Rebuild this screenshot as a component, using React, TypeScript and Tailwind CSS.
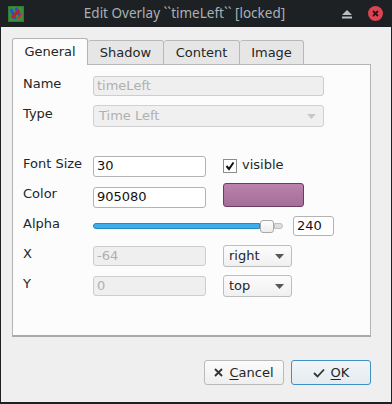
import React from "react";

const font = { fontFamily: '"DejaVu Sans", "Noto Sans", sans-serif' };
const titleFont = { fontFamily: '"Noto Sans", "DejaVu Sans", sans-serif' };

function Arrow({ color }: { color: string }) {
  return (
    <svg width="9" height="5" viewBox="0 0 9 5">
      <path d="M0 0 L9 0 L4.5 5 Z" fill={color} />
    </svg>
  );
}

function Label({ children }: { children: React.ReactNode }) {
  return <div className="w-[70px] shrink-0 pb-[5px] text-[#232627]">{children}</div>;
}

export default function App() {
  return (
    <div className="w-[392px] h-[404px] bg-[#1d2124] flex flex-col text-[13px]" style={font}>
      {/* title bar */}
      <div className="h-[27px] flex items-center px-[8px] shrink-0">
        <svg width="16" height="16" viewBox="0 0 16 16">
          <rect width="16" height="16" fill="#2e7d32" />
          <rect x="1" y="1" width="14" height="14" fill="#3a8f3a" />
          <path d="M3 3 L7 13 M8 2 L12 10" stroke="#2a4fd0" strokeWidth="3" />
          <path d="M4 12 L11 4" stroke="#c0202a" strokeWidth="3" />
          <path d="M10 13 L14 8" stroke="#d03040" strokeWidth="2" />
        </svg>
        <div className="flex-1 text-center text-[#a9b1b6] text-[13.5px] pl-[4px]" style={titleFont}>
          Edit Overlay ``timeLeft`` [locked]
        </div>
        <svg width="12" height="10" viewBox="0 0 12 10" className="mr-[15px]">
          <path d="M1 6 L6 1 L11 6 Z" fill="#b8bec2" />
          <rect x="1" y="7.5" width="10" height="2" fill="#b8bec2" />
        </svg>
        <div className="w-[15px] h-[15px] rounded-full bg-[#da4453] flex items-center justify-center mr-[1px]">
          <svg width="7" height="7" viewBox="0 0 7 7">
            <path d="M1 1 L6 6 M6 1 L1 6" stroke="#2a1416" strokeWidth="1.8" />
          </svg>
        </div>
      </div>

      {/* body */}
      <div className="flex-1 bg-[#efefef] mx-[1px] mb-[2px] pt-[11px] pl-[11px] pr-[20px] flex flex-col">
        {/* tabs */}
        <div className="flex items-end h-[27px] relative z-10">
          <div className="w-[76px] h-[27px] bg-[#fcfcfc] border border-[#b4b4b4] border-b-0 rounded-t-[3px] flex items-center justify-center text-[#232627] pb-[1px]">
            General
          </div>
          <div className="w-[76px] h-[25px] bg-[#e6e6e6] border border-[#b8b8b8] border-l-0 rounded-t-[3px] flex items-center justify-center text-[#232627]">
            Shadow
          </div>
          <div className="w-[76px] h-[25px] bg-[#e6e6e6] border border-[#b8b8b8] border-l-0 rounded-t-[3px] flex items-center justify-center text-[#232627]">
            Content
          </div>
          <div className="w-[64px] h-[25px] bg-[#e6e6e6] border border-[#b8b8b8] border-l-0 rounded-t-[3px] flex items-center justify-center text-[#232627]">
            Image
          </div>
        </div>
        {/* panel */}
        <div className="-mt-[1px] w-[359px] h-[273px] bg-[#fcfcfc] border border-[#b4b4b4] border-b-2 border-b-[#aaaaaa] pt-[6px] pl-[10px] flex flex-col">
          <div className="h-[30px] flex items-center">
            <Label>Name</Label>
            <div className="w-[231px] h-[20px] rounded-[3px] border border-[#cdcdcd] bg-[#efefef] text-[#b0b0b0] pl-[3px] flex items-center">
              timeLeft
            </div>
          </div>
          <div className="h-[30px] flex items-center">
            <Label>Type</Label>
            <div className="w-[231px] h-[22px] rounded-[3px] border border-[#d0d0d0] bg-[#f0f0f0] text-[#b0b0b0] pl-[5px] pr-[7px] flex items-center justify-between">
              <span>Time Left</span>
              <Arrow color="#c8c8c8" />
            </div>
          </div>
          <div className="h-[20px]" />
          <div className="h-[30px] flex items-center">
            <Label>Font Size</Label>
            <div className="w-[113px] h-[21px] rounded-[3px] border border-[#b3b3b3] bg-white text-[#111] pl-[3px] flex items-center">
              30
            </div>
            <div className="ml-[17px] w-[14px] h-[14px] border border-[#8c8c8c] bg-white flex items-center justify-center mb-[1px]">
              <svg width="10" height="10" viewBox="0 0 10 10">
                <path d="M1.5 5 L4 8 L8.5 1.5" stroke="#111" strokeWidth="2" fill="none" />
              </svg>
            </div>
            <div className="ml-[5px] text-[#232627] mb-[3px]">visible</div>
          </div>
          <div className="h-[30px] flex items-center">
            <Label>Color</Label>
            <div className="w-[113px] h-[21px] rounded-[3px] border border-[#b3b3b3] bg-white text-[#111] pl-[3px] flex items-center mt-[2px]">
              905080
            </div>
            <div className="ml-[17px] w-[81px] h-[24px] rounded-[3px] border border-[#6b3b63] bg-gradient-to-b from-[#ba82ad] to-[#a56f99] mb-[2px]" />
          </div>
          <div className="h-[30px] flex items-center">
            <Label>Alpha</Label>
            <div className="w-[190px] h-[14px] flex items-center">
              <div className="w-[167px] h-[6px] rounded-l-[3px] bg-[#3daee9] border border-[#2a88c0]" />
              <div className="w-[14px] h-[13px] rounded-[3px] border border-[#a8a8a8] bg-gradient-to-b from-[#fdfdfd] to-[#ececec] shrink-0" />
              <div className="flex-1 h-[6px] rounded-r-[3px] bg-[#dedede] border border-[#bdbdbd]" />
            </div>
            <div className="ml-[10px] w-[41px] h-[20px] rounded-[3px] border border-[#b3b3b3] bg-white text-[#111] pl-[3px] flex items-center">
              240
            </div>
          </div>
          <div className="h-[30px] flex items-center">
            <Label>X</Label>
            <div className="w-[113px] h-[20px] rounded-[3px] border border-[#cdcdcd] bg-[#efefef] text-[#b0b0b0] pl-[3px] flex items-center">
              -64
            </div>
            <div className="ml-[17px] w-[69px] h-[22px] rounded-[3px] border border-[#bdbdbd] bg-gradient-to-b from-[#fcfcfc] to-[#f0f0f0] text-[#232627] pl-[5px] pr-[7px] flex items-center justify-between">
              <span>right</span>
              <Arrow color="#555" />
            </div>
          </div>
          <div className="h-[30px] flex items-center">
            <Label>Y</Label>
            <div className="w-[113px] h-[20px] rounded-[3px] border border-[#cdcdcd] bg-[#efefef] text-[#b0b0b0] pl-[3px] flex items-center">
              0
            </div>
            <div className="ml-[17px] w-[69px] h-[22px] rounded-[3px] border border-[#bdbdbd] bg-gradient-to-b from-[#fcfcfc] to-[#f0f0f0] text-[#232627] pl-[5px] pr-[7px] flex items-center justify-between">
              <span>top</span>
              <Arrow color="#555" />
            </div>
          </div>
        </div>

        {/* buttons */}
        <div className="mt-[23px] w-[359px] flex justify-end gap-[7px]">
          <div className="w-[80px] h-[25px] rounded-[3px] border border-[#bababa] bg-gradient-to-b from-[#fbfbfb] to-[#efefef] flex items-center justify-center text-[#232627] gap-[6px]">
            <svg width="9" height="9" viewBox="0 0 9 9">
              <path d="M1 1 L8 8 M8 1 L1 8" stroke="#333" strokeWidth="1.8" />
            </svg>
            <span>
              <span className="underline underline-offset-2">C</span>ancel
            </span>
          </div>
          <div className="w-[80px] h-[25px] rounded-[3px] border border-[#3d8fc4] bg-gradient-to-b from-[#f2f5f7] to-[#e4ebef] flex items-center justify-center text-[#232627] gap-[6px]">
            <svg width="12" height="10" viewBox="0 0 12 10">
              <path d="M1 5 L4.5 8.5 L11 1.5" stroke="#333" strokeWidth="1.8" fill="none" />
            </svg>
            <span>
              <span className="underline underline-offset-2">O</span>K
            </span>
          </div>
        </div>
      </div>
    </div>
  );
}
